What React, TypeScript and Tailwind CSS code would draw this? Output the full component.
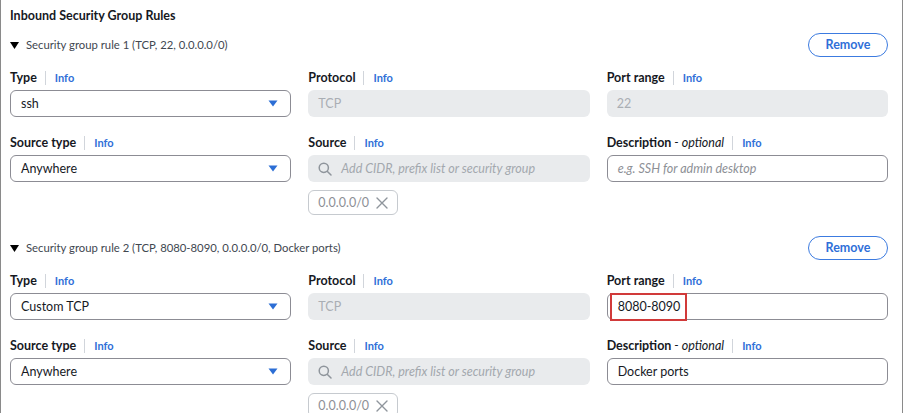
import React from 'react';

const FONT = "font-['Lato','Liberation_Sans',sans-serif]";

function Triangle() {
  return (
    <svg width="9" height="7" viewBox="0 0 9 7" className="shrink-0">
      <path d="M0 0 H9 L4.5 7 Z" fill="#000" />
    </svg>
  );
}

function CaretDown() {
  return (
    <svg width="10" height="7" viewBox="0 0 10 7">
      <path d="M0.5 0.5 H9.5 L5 6.5 Z" fill="#2c6ed5" />
    </svg>
  );
}

function SearchIcon() {
  return (
    <svg width="14" height="14" viewBox="0 0 14 14" fill="none" stroke="#8f959c" strokeWidth="1.5">
      <circle cx="5.8" cy="5.8" r="4.6" />
      <path d="M9.2 9.2 L13 13" strokeLinecap="round" />
    </svg>
  );
}

function CloseIcon() {
  return (
    <svg width="12" height="12" viewBox="0 0 12 12" fill="none" stroke="#8f959c" strokeWidth="1.4">
      <path d="M1 1 L11 11 M11 1 L1 11" strokeLinecap="round" />
    </svg>
  );
}

function FieldLabel({ label, optional }: { label: string; optional?: boolean }) {
  return (
    <div className="flex items-center h-4 mb-1">
      <span className="text-[12.5px] font-bold text-[#16191f] leading-4">
        {label}
        {optional && <span className="font-normal italic"> - optional</span>}
      </span>
      <span className="w-px h-[14px] bg-[#d1d5db] ml-2 mr-[9px]" />
      <span className="text-[11px] font-bold text-[#2f6fd8] leading-4">Info</span>
    </div>
  );
}

function SelectBox({ value }: { value: string }) {
  return (
    <div className="h-[27px] border border-[#8c8c94] rounded-md bg-white flex items-center justify-between pl-[10px] pr-[12px]">
      <span className="text-[12.5px] text-[#16191f] pt-[2px]">{value}</span>
      <CaretDown />
    </div>
  );
}

function DisabledBox({ value }: { value: string }) {
  return (
    <div className="h-[27px] rounded-md bg-[#e9ebed] flex items-center px-[10px]">
      <span className="text-[12.5px] text-[#a9aeb4] pt-[2px]">{value}</span>
    </div>
  );
}

function TextBox({ value, placeholder, highlight }: { value?: string; placeholder?: string; highlight?: boolean }) {
  return (
    <div className="relative h-[27px] border border-[#8c8c94] rounded-md bg-white flex items-center px-[10px]">
      {value ? (
        <span className="text-[12.5px] text-[#16191f] pt-[2px]">{value}</span>
      ) : (
        <span className="text-[12.5px] italic text-[#8d9096] pt-[2px]">{placeholder}</span>
      )}
      {highlight && (
        <div className="absolute left-[2px] top-[-1px] w-[77px] h-[28px] border-2 border-[#d13a3a]" />
      )}
    </div>
  );
}

function SourceBox() {
  return (
    <div>
      <div className="h-[27px] rounded-md bg-[#e9ebed] flex items-center pl-[10px] gap-[9px]">
        <SearchIcon />
        <span className="text-[12.5px] italic text-[#a3a8ae] pt-[2px]">Add CIDR, prefix list or security group</span>
      </div>
      <div className="mt-2 w-[90px] h-[25px] border border-[#c6cacf] rounded-md flex items-center justify-between pl-[9px] pr-[9px]">
        <span className="text-[12.5px] text-[#8d9096] pt-[2px]">0.0.0.0/0</span>
        <CloseIcon />
      </div>
    </div>
  );
}

interface Rule {
  title: string;
  type: string;
  port: string;
  portEditable: boolean;
  description: string;
}

const rules: Rule[] = [
  { title: 'Security group rule 1 (TCP, 22, 0.0.0.0/0)', type: 'ssh', port: '22', portEditable: false, description: '' },
  {
    title: 'Security group rule 2 (TCP, 8080-8090, 0.0.0.0/0, Docker ports)',
    type: 'Custom TCP',
    port: '8080-8090',
    portEditable: true,
    description: 'Docker ports',
  },
];

function RuleBlock({ rule }: { rule: Rule }) {
  return (
    <div>
      <div className="flex items-center justify-between h-6">
        <div className="flex items-center gap-[7px]">
          <Triangle />
          <span className="text-[11.3px] text-[#414750]">{rule.title}</span>
        </div>
        <button
          type="button"
          className="w-[80px] h-6 rounded-full border-[1.5px] border-[#3c7be0] text-[12.5px] font-bold text-[#2f6fd8] bg-white"
        >
          Remove
        </button>
      </div>
      <div className="mt-[13px] grid grid-cols-3 gap-x-[17px] gap-y-[18px] items-start">
        <div>
          <FieldLabel label="Type" />
          <SelectBox value={rule.type} />
        </div>
        <div>
          <FieldLabel label="Protocol" />
          <DisabledBox value="TCP" />
        </div>
        <div>
          <FieldLabel label="Port range" />
          {rule.portEditable ? <TextBox value={rule.port} highlight /> : <DisabledBox value={rule.port} />}
        </div>
        <div>
          <FieldLabel label="Source type" />
          <SelectBox value="Anywhere" />
        </div>
        <div>
          <FieldLabel label="Source" />
          <SourceBox />
        </div>
        <div>
          <FieldLabel label="Description" optional />
          <TextBox value={rule.description} placeholder="e.g. SSH for admin desktop" />
        </div>
      </div>
    </div>
  );
}

export default function App() {
  return (
    <div className={`${FONT} w-[904px] h-[413px] overflow-hidden bg-white`}>
      <div className="w-[903px] h-full border-x border-[#8a8a8a] pl-[9px] pr-[14px]">
        <div className="pt-2 text-[12.5px] font-bold text-[#16191f] leading-4">Inbound Security Group Rules</div>
        <div className="mt-[9px] flex flex-col gap-[21px]">
          {rules.map((r) => (
            <RuleBlock key={r.title} rule={r} />
          ))}
        </div>
      </div>
    </div>
  );
}
